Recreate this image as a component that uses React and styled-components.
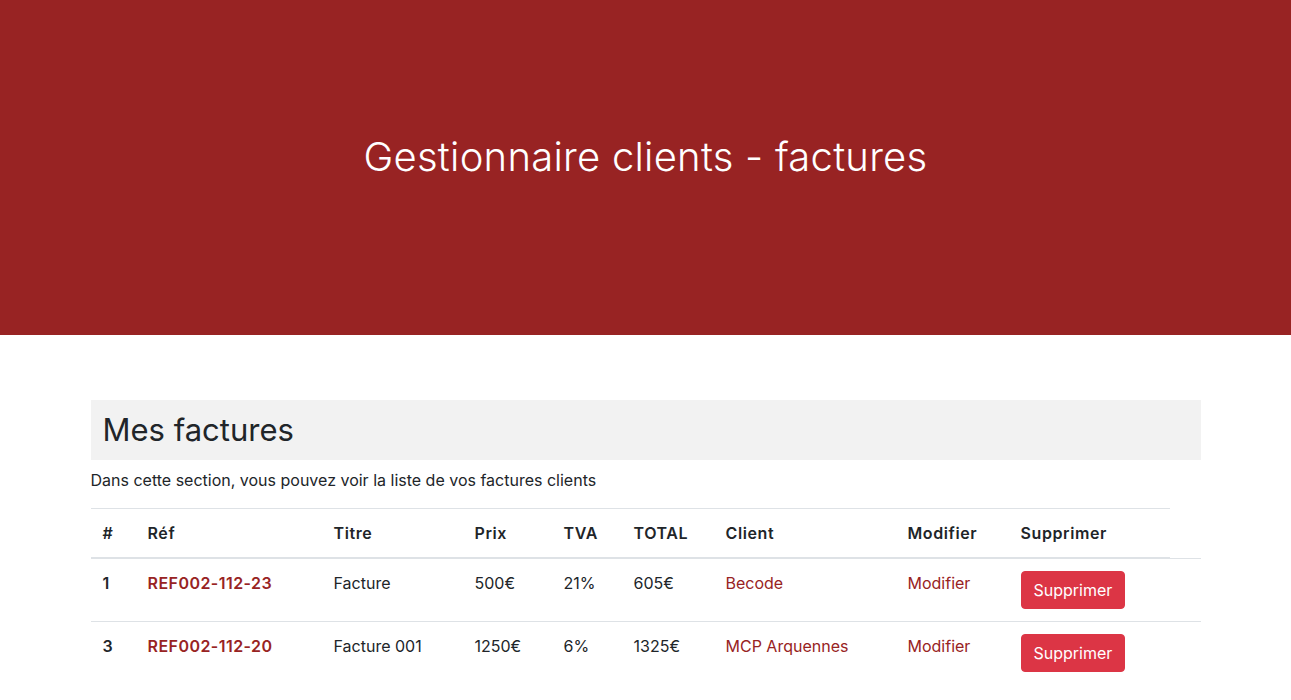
import React from "react";
import styled, { createGlobalStyle } from "styled-components";

const GlobalStyle = createGlobalStyle`
  * { box-sizing: border-box; }
  body {
    margin: 0;
    font-family: "Inter", "Noto Sans", sans-serif;
    font-size: 16px;
    line-height: 1.5;
    color: #212529;
    background: #fff;
  }
`;

const Hero = styled.header`
  height: 335px;
  background: #982323;
  padding-top: 133px;
  text-align: center;
`;

const HeroTitle = styled.h1`
  margin: 0;
  font-size: 40px;
  font-weight: 300;
  line-height: 1.2;
  color: #fff;
  letter-spacing: 0.25px;
`;

const Container = styled.main`
  width: 1110px;
  margin: 65px auto 0;
`;

const SectionHead = styled.div`
  background: #f2f2f2;
  height: 60px;
  padding: 0 12px;
  display: flex;
  align-items: center;
`;

const SectionTitle = styled.h2`
  margin: 0;
  font-size: 31px;
  font-weight: 400;
  line-height: 1.2;
`;

const Lead = styled.p`
  margin: 8px 0 16px;
  font-size: 16px;
`;

const Table = styled.table`
  width: 100%;
  border-collapse: collapse;
  table-layout: fixed;
`;

const Col = styled.col`
  width: ${(p) => p.$w}px;
`;

const Th = styled.th`
  text-align: left;
  font-weight: 600;
  letter-spacing: 0.6px;
  padding: 12px;
  border-top: 1px solid #dee2e6;
  border-bottom: 2px solid #dee2e6;
  vertical-align: bottom;
  white-space: nowrap;
`;

const Td = styled.td`
  padding: 12px;
  border-top: 1px solid #dee2e6;
  vertical-align: top;
  white-space: nowrap;
  font-weight: ${(p) => (p.$bold ? 600 : 400)};
`;

const Link = styled.a`
  color: #982323;
  text-decoration: none;
  font-weight: ${(p) => (p.$bold ? 600 : 400)};
  letter-spacing: ${(p) => (p.$bold ? "0.45px" : "0")};
`;

const DangerButton = styled.button`
  font-family: inherit;
  font-size: 16px;
  line-height: 1.5;
  color: #fff;
  background: #dc3545;
  border: 1px solid #dc3545;
  border-radius: 4px;
  padding: 6px 12px;
  cursor: pointer;
`;

const widths = [45, 186, 141, 89, 70, 92, 182, 113, 161, 31];
const headers = ["#", "Réf", "Titre", "Prix", "TVA", "TOTAL", "Client", "Modifier", "Supprimer"];

const invoices = [
  { id: 1, ref: "REF002-112-23", title: "Facture", price: "500€", tva: "21%", total: "605€", client: "Becode" },
  { id: 3, ref: "REF002-112-20", title: "Facture 001", price: "1250€", tva: "6%", total: "1325€", client: "MCP Arquennes" },
];

export default function App() {
  return (
    <>
      <GlobalStyle />
      <Hero>
        <HeroTitle>Gestionnaire clients - factures</HeroTitle>
      </Hero>
      <Container>
        <SectionHead>
          <SectionTitle>Mes factures</SectionTitle>
        </SectionHead>
        <Lead>Dans cette section, vous pouvez voir la liste de vos factures clients</Lead>
        <Table>
          <colgroup>
            {widths.map((w, i) => (
              <Col key={i} $w={w} />
            ))}
          </colgroup>
          <thead>
            <tr>
              {headers.map((h) => (
                <Th key={h}>{h}</Th>
              ))}
            </tr>
          </thead>
          <tbody>
            {invoices.map((inv) => (
              <tr key={inv.id}>
                <Td $bold>{inv.id}</Td>
                <Td>
                  <Link href="#" $bold>{inv.ref}</Link>
                </Td>
                <Td>{inv.title}</Td>
                <Td>{inv.price}</Td>
                <Td>{inv.tva}</Td>
                <Td>{inv.total}</Td>
                <Td>
                  <Link href="#">{inv.client}</Link>
                </Td>
                <Td>
                  <Link href="#">Modifier</Link>
                </Td>
                <Td>
                  <DangerButton type="button">Supprimer</DangerButton>
                </Td>
                <Td />
              </tr>
            ))}
          </tbody>
        </Table>
      </Container>
    </>
  );
}
